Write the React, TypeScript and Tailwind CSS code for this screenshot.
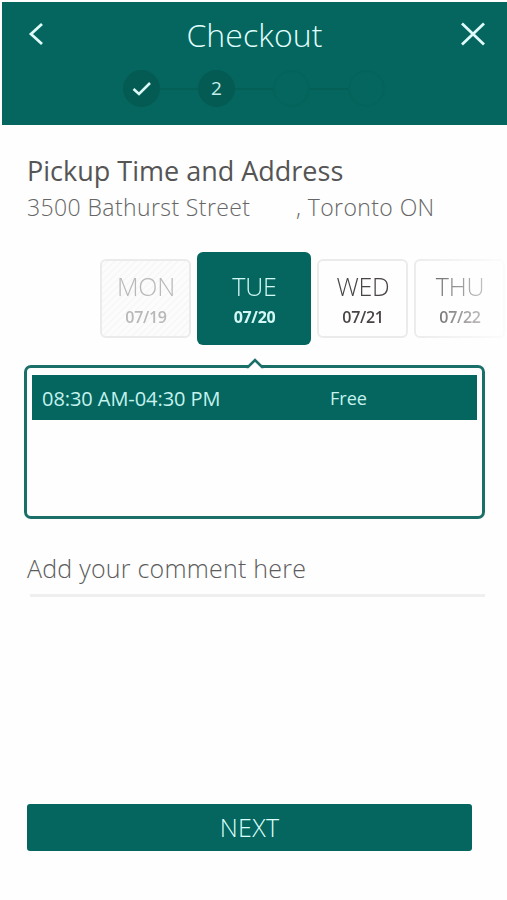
import clsx from 'clsx';

type Day = {
  name: string;
  date: string;
  state: 'disabled' | 'selected' | 'open';
};

const days: Day[] = [
  { name: 'MON', date: '07/19', state: 'disabled' },
  { name: 'TUE', date: '07/20', state: 'selected' },
  { name: 'WED', date: '07/21', state: 'open' },
  { name: 'THU', date: '07/22', state: 'open' },
];

function Stepper() {
  return (
    <div className="mt-[15px] flex items-center justify-center">
      <div className="flex size-[37px] items-center justify-center rounded-full bg-[#045b53]">
        <svg width="20" height="16" viewBox="0 0 20 16" fill="none" className="text-[#dcf8f5]">
          <path d="M1.5 8 L7 13 L18 2" stroke="currentColor" strokeWidth="2.6" />
        </svg>
      </div>
      <div className="h-[2px] w-[38px] bg-[#045f56]" />
      <div className="flex size-[37px] items-center justify-center rounded-full bg-[#045b53] text-[19px] text-[#c5eeea]">
        2
      </div>
      <div className="h-[2px] w-[38px] bg-[#045f56]" />
      <div className="size-[37px] rounded-full border-2 border-[#04645c]" />
      <div className="h-[2px] w-[38px] bg-[#045f56]" />
      <div className="size-[37px] rounded-full border-2 border-[#04645c]" />
    </div>
  );
}

function Header() {
  return (
    <header className="ml-[2px] h-[123px] bg-[#04665e] pt-[10px]">
      <div className="flex h-[48px] items-center justify-between pr-[21px] pl-[26px]">
        <svg width="17" height="24" viewBox="0 0 17 24" fill="none" className="mb-[5px]">
          <path d="M14 2 L3 12 L14 22" stroke="#dffaf8" strokeWidth="2.8" />
        </svg>
        <h1 className="mr-[3px] mb-[2px] ml-[7px] text-[32px] leading-[46px] font-light tracking-[0.1px] text-[#e2fffd]">
          Checkout
        </h1>
        <svg width="26" height="24" viewBox="0 0 26 24" fill="none" className="mb-[5px]">
          <path d="M2 1.5 L24 22.5 M24 1.5 L2 22.5" stroke="#dffaf8" strokeWidth="2.8" />
        </svg>
      </div>
      <div className="-mt-[5px] -ml-px">
        <Stepper />
      </div>
    </header>
  );
}

function DayCard({ day }: { day: Day }) {
  return (
    <div
      className={clsx(
        'flex shrink-0 flex-col items-center justify-center rounded-[6px] pt-[3px] pl-px',
        day.state === 'selected'
          ? 'h-[93px] w-[114px] bg-[#04665e] text-[#d2f8f5]'
          : 'h-[79px] w-[91px] border-2 border-[#ebebeb]',
        day.state === 'disabled' &&
          'bg-[repeating-linear-gradient(135deg,#fcfcfc_0px,#fcfcfc_3px,#f8f8f8_3px,#f8f8f8_5px)] text-[#b8b8b8]',
        day.state === 'open' && 'text-[#4a4545]',
      )}
    >
      <span className="text-[25px] leading-[32px] font-light tracking-[-0.2px]">{day.name}</span>
      <span
        className={clsx(
          'mt-[2px] text-[16px] leading-[26px] tracking-[-0.3px]',
          day.state === 'selected' ? 'font-bold' : 'font-semibold',
        )}
      >
        {day.date}
      </span>
    </div>
  );
}

function TimeSlots() {
  return (
    <div className="relative mt-[20px] ml-[24px] h-[154px] w-[461px] rounded-[7px] border-3 border-[#1a7068] px-[5px] pt-[7px]">
      {/* pointer towards the selected day */}
      <svg
        width="20"
        height="12"
        viewBox="0 0 20 12"
        fill="none"
        className="absolute -top-[10px] left-[218px]"
      >
        <path d="M2 12 L3 9 L10 2 L17 9 L18 12 Z" fill="#fff" />
        <path d="M1.5 9 H3 L10 2 L17 9 H18.5" stroke="#1a7068" strokeWidth="2.6" />
      </svg>
      <div className="flex h-[45px] items-center bg-[#04665e] pt-[2px] pl-[10px] text-[#c5f2ee]">
        <span className="w-[288px] text-[20px] tracking-[-0.06px]">08:30 AM-04:30 PM</span>
        <span className="text-[18px]">Free</span>
      </div>
    </div>
  );
}

export default function App() {
  return (
    <main className="h-[900px] w-[507px] overflow-hidden bg-[#fefefe] pt-[2px] font-['Open_Sans',sans-serif]">
      <Header />

      <section className="px-[27px] pt-[26px]">
        <h2 className="text-[27px] leading-[40px] whitespace-nowrap text-[#555]">
          Pickup Time and Address
        </h2>
        <p className="flex text-[23px] leading-[32px] font-light tracking-[0.4px] whitespace-nowrap text-[#666]">
          <span className="w-[269px]">3500 Bathurst Street</span>
          <span>, Toronto ON</span>
        </p>
      </section>

      <div className="mt-[29px] flex h-[93px] items-center gap-[6px] overflow-hidden mask-[linear-gradient(to_right,#000_410px,transparent_520px)] pl-[100px]">
        {days.map((day) => (
          <DayCard key={day.name} day={day} />
        ))}
      </div>

      <TimeSlots />

      <div className="mt-[31px] ml-[27px] w-[458px]">
        <p className="h-[44px] text-[25px] leading-[36px] font-light tracking-[0.23px] text-[#5c5c5c]">
          Add your comment here
        </p>
        <div className="ml-[3px] h-[3px] bg-[#efefef]" />
      </div>

      <button className="mt-[207px] ml-[27px] block h-[47px] w-[445px] rounded-[3px] bg-[#04665e] text-[25px] leading-[47px] font-light tracking-[0.3px] text-[#dcfffc]">
        NEXT
      </button>
    </main>
  );
}
